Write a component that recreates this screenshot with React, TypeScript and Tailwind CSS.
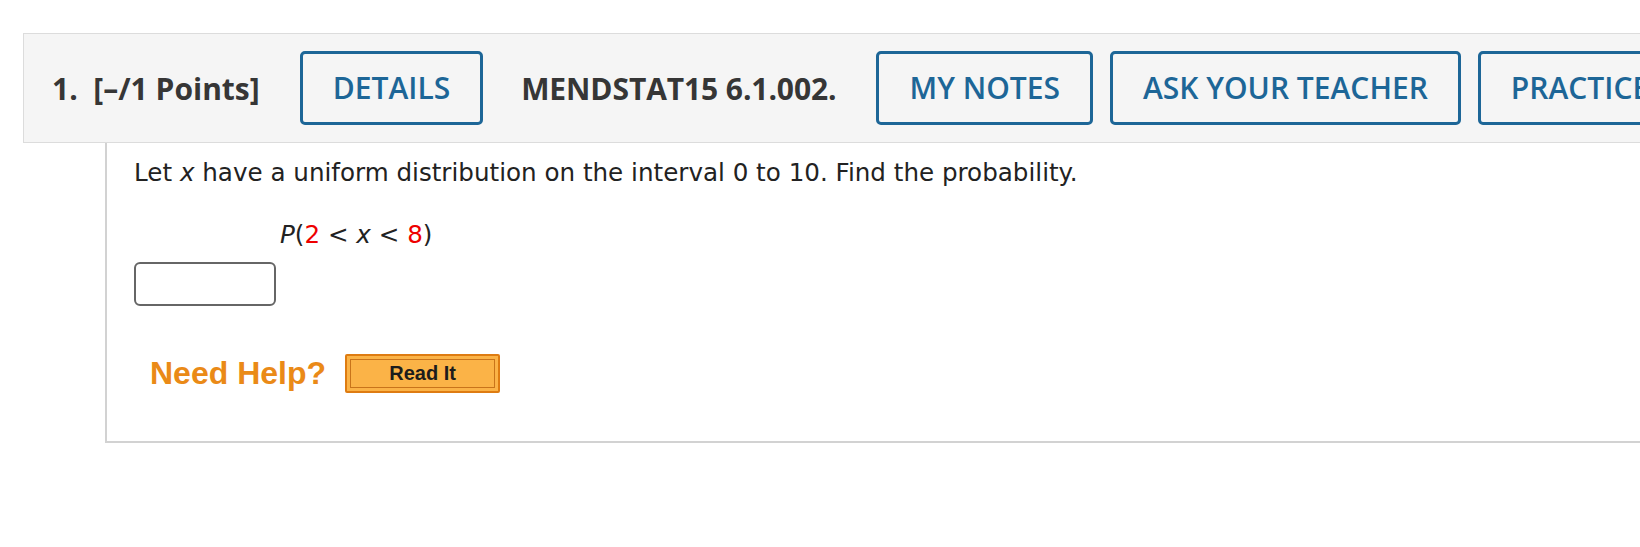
import React from "react";

const headerBtn =
  "h-[74px] shrink-0 whitespace-nowrap rounded-[5px] border-[3px] border-[#1d6697] px-[30px] text-[30px] font-semibold text-[#1d6697] leading-none";

function QuestionHeader() {
  return (
    <div className="ml-[23px] mt-[33px] flex h-[110px] w-[1800px] items-center border border-[#dcdcdc] bg-[#f5f5f5] pl-[28px] font-['Open_Sans',sans-serif]">
      <span className="shrink-0 whitespace-nowrap text-[30px] font-bold text-[#363636]">1.&nbsp; [–/1 Points]</span>
      <button className={`${headerBtn} ml-[40px]`}>DETAILS</button>
      <span className="ml-[38px] shrink-0 whitespace-nowrap text-[30px] font-bold tracking-[-0.1px] text-[#363636]">
        MENDSTAT15 6.1.002.
      </span>
      <button className={`${headerBtn} ml-[40px]`}>MY NOTES</button>
      <button className={`${headerBtn} ml-[17px]`}>ASK YOUR TEACHER</button>
      <button className={`${headerBtn} ml-[17px]`}>PRACTICE ANOTHER</button>
    </div>
  );
}

function QuestionBody() {
  return (
    <div className="ml-[105px] w-[1700px] border-b-2 border-l-2 border-[#d2d2d2] pb-[44px] pl-[27px] pt-[13px]">
      <p className="font-['DejaVu_Sans',Verdana,sans-serif] text-[24.6px] leading-[33px] text-[#222]">
        Let <i>x</i> have a uniform distribution on the interval 0 to 10. Find the probability.
      </p>
      <p className="mt-[29px] pl-[146px] font-['DejaVu_Sans',Verdana,sans-serif] text-[24.6px] leading-[33px] text-[#222]">
        <i>P</i>(<span className="text-[#e00]">2</span> &lt; <i>x</i> &lt; <span className="text-[#e00]">8</span>)
      </p>
      <input
        type="text"
        className="mt-[11px] block h-[44px] w-[142px] rounded-[6px] border-2 border-[#666] bg-white outline-none"
      />
      <div className="mt-[43px] flex items-center pl-[16px] font-['Liberation_Sans',Arial,sans-serif]">
        <span className="text-[32px] font-bold text-[#ea8a17]">Need Help?</span>
        <button className="ml-[19px] h-[39px] w-[155px] rounded-[2px] border-2 border-[#de7c12] bg-[#fbb347] p-[3px]">
          <span className="flex h-full w-full items-center justify-center border border-[#c9741a] text-[20px] font-bold text-[#1c1c1c]">
            Read It
          </span>
        </button>
      </div>
    </div>
  );
}

export default function App() {
  return (
    <div className="h-[547px] w-[1640px] overflow-hidden bg-white">
      <QuestionHeader />
      <QuestionBody />
    </div>
  );
}
